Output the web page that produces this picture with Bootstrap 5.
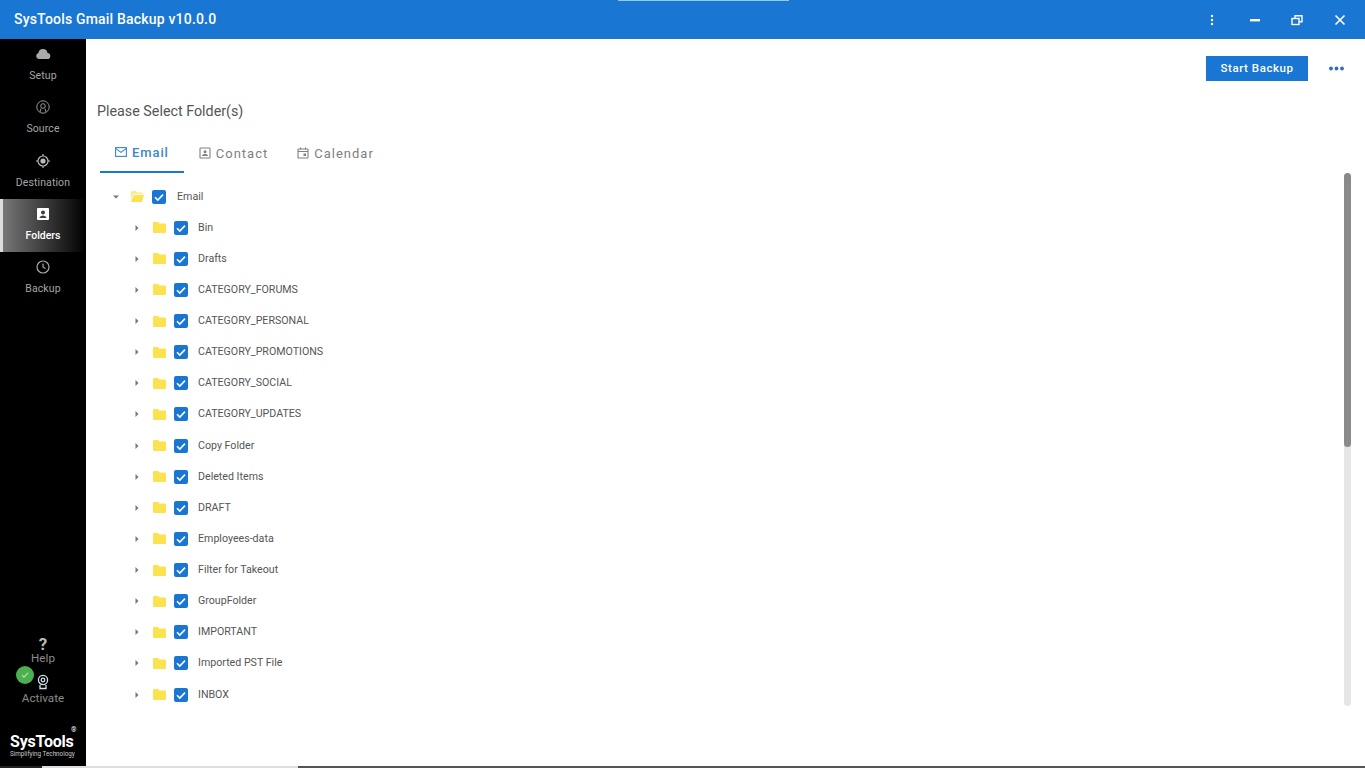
<!DOCTYPE html>
<html lang="en">
<head>
  <meta charset="UTF-8">
  <title>SysTools Gmail Backup</title>
  <link href="https://cdn.jsdelivr.net/npm/bootstrap@5.3.2/dist/css/bootstrap.min.css" rel="stylesheet">
  <style>
    html, body { height: 100%; overflow: hidden; }
    body { font-family: Roboto, "Liberation Sans", sans-serif; color: #444; background: #fff; }
    .app { height: 766px; }
    .titlebar { height: 39px; background: #1976d2; color: #fff; padding: 0 14px; position: relative; }
    .titlebar::before { content: ""; position: absolute; left: 618px; top: 0; width: 171px; height: 1px; background: #90caf9; }
    .app-title { font-size: 14px; font-weight: 500; letter-spacing: .19px; }
    .win-btn { width: 14px; height: 14px; display: block; }
    .win-gap { margin-right: 29px; }
    .win-gap-min { margin-right: 28px; }
    .win-close { margin-right: 4px; }
    .sidebar { width: 86px; background: #000; flex: none; }
    .side-item { height: 53.3px; color: #a5a5a5; font-size: 10.5px; letter-spacing: .1px; padding-top: 7px; }
    .side-item svg { width: 16px; height: 16px; margin-bottom: 6px; display: block; }
    .side-item.active { color: #fff; font-weight: 500; letter-spacing: 0; background: linear-gradient(90deg, #777, #000); border-left: 3px solid #ddd; padding-right: 3px; }
    .side-bottom { color: #8a8a8a; font-size: 11.7px; }
    .help-mark { font-size: 17px; line-height: 12px; font-weight: 700; color: #bbb; }
    .activate { position: relative; margin-top: 7px; }
    .activate svg.badge-icon { width: 14px; height: 16px; display: block; }
    .ok-dot { position: absolute; left: 16px; top: -8px; width: 18px; height: 18px; background: #4caf50; border-radius: 50%; }
    .logo { height: 38px; margin-top: 20px; padding: 5px 0 0 10px; color: #fff; position: relative; }
    .logo-name { font-size: 16px; font-weight: 700; line-height: 17px; letter-spacing: -.2px; }
    .logo-name sup { position: absolute; left: 71px; top: 2px; font-size: 7px; font-weight: 400; }
    .logo-sub { font-size: 6.3px; line-height: 8px; white-space: nowrap; color: #ccc; }
    .toolbar { height: 53px; padding: 17px 21px 0 0; }
    .btn-start { width: 102px; height: 25px; padding: 0; border: 0; border-radius: 0; background: #1976d2; color: #fff; font-size: 11.5px; font-weight: 500; letter-spacing: .55px; }
    .more-dots { margin-left: 21px; width: 15px; }
    .page-title { font-size: 14.3px; margin: 11px 0 0 11px; line-height: 17px; color: #555; }
    .tabs { margin: 15px 0 0 14px; height: 38px; }
    .tab { font-size: 13px; font-weight: 400; letter-spacing: 1px; color: #808080; height: 38px; padding: 0 15px; gap: 5px; }
    .tab svg { width: 12px; height: 12px; flex: none; margin-top: -2px; }
    .tab.active { color: #3d85c6; font-weight: 500; letter-spacing: .9px; border-bottom: 2px solid #1976d2; }
    .tab-next { margin-left: -1px; }
    .body-row { height: 533px; }
    .tree { flex: 1; padding-top: 8px; overflow: hidden; }
    .tree-row { height: 31.13px; font-size: 10.65px; color: #555; }
    .root { padding-left: 27px; }
    .child { padding-left: 48px; }
    .caret { width: 6px; height: 6px; flex: none; margin-right: 13px; }
    .folder { width: 13px; height: 11px; flex: none; margin-right: 8px; }
    .root .caret { margin-right: 12px; }
    .check { width: 14px; height: 14px; border-radius: 2px; background: #1976d2; flex: none; margin-right: 10px; }
    .root .check { margin-right: 11px; }
    .scroll-track { width: 7px; height: 533px; margin-right: 14px; background: #e6e6e6; border-radius: 4px; flex: none; }
    .scroll-thumb { height: 274px; background: #8a8a8a; border-radius: 4px; }
    .bottom-strip { height: 2px; background: #555; }
    .strip-a { width: 42px; background: #222; }
    .strip-b { width: 256px; background: #ddd; }
  </style>
</head>
<body>
  <svg width="0" height="0" class="position-absolute">
    <symbol id="folder" viewBox="0 0 13 11"><path fill="#fde24f" d="M1 0h4l1.500 1.500H12a1 1 0 0 1 1 1V10a1 1 0 0 1-1 1H1a1 1 0 0 1-1-1V1a1 1 0 0 1 1-1z"/></symbol>
    <symbol id="tick" viewBox="0 0 14 14"><path fill="none" stroke="#fff" stroke-width="1.600" d="M3 7.200l2.800 2.800L11 4.600"/></symbol>
    <symbol id="caret-right" viewBox="0 0 6 6"><path fill="#777" d="M1.500 0l3 3-3 3z"/></symbol>
  </svg>

  <div class="app d-flex flex-column">
    <!-- Title bar -->
    <header class="titlebar d-flex align-items-center">
      <div class="app-title">SysTools Gmail Backup v10.0.0</div>
      <div class="ms-auto d-flex align-items-center">
        <svg class="win-btn win-gap" viewBox="0 0 14 14"><g fill="#fff"><circle cx="7" cy="3" r="1.200"/><circle cx="7" cy="7" r="1.200"/><circle cx="7" cy="11" r="1.200"/></g></svg>
        <svg class="win-btn win-gap-min" viewBox="0 0 14 14"><rect x="2" y="6" width="10" height="2.400" fill="#fff"/></svg>
        <svg class="win-btn win-gap" viewBox="0 0 14 14"><g fill="none" stroke="#fff" stroke-width="1.400"><rect x="2" y="5.500" width="7" height="6"/><path d="M5 5V2.700h7v6H9.200"/></g></svg>
        <svg class="win-btn win-close" viewBox="0 0 14 14"><path stroke="#fff" stroke-width="1.600" d="M2.500 2.500l9 9M11.500 2.500l-9 9"/></svg>
      </div>
    </header>

    <div class="d-flex flex-grow-1">
      <!-- Sidebar -->
      <nav class="sidebar d-flex flex-column">
        <div class="side-item d-flex flex-column align-items-center">
          <svg viewBox="0 0 16 16"><path fill="#aaa" d="M4 13a3 3 0 0 1-.6-5.900A4.700 4.700 0 0 1 8 3a4.500 4.500 0 0 1 4.500 3.900A3 3 0 0 1 12 13z"/></svg>
          <span>Setup</span>
        </div>
        <div class="side-item d-flex flex-column align-items-center">
          <svg viewBox="0 0 16 16"><g fill="none" stroke="#999" stroke-width="1"><circle cx="8" cy="8" r="6.200"/><circle cx="8" cy="7" r="2.300"/><path d="M6 9.500L5 13M10 9.500L11 13"/></g></svg>
          <span>Source</span>
        </div>
        <div class="side-item d-flex flex-column align-items-center">
          <svg viewBox="0 0 16 16"><g fill="none" stroke="#bbb" stroke-width="1.200"><circle cx="8" cy="8" r="5"/><path d="M8 1v2M8 13v2M1 8h2M13 8h2"/></g><circle cx="8" cy="8" r="2.600" fill="#bbb"/></svg>
          <span>Destination</span>
        </div>
        <div class="side-item active d-flex flex-column align-items-center">
          <svg viewBox="0 0 16 16"><path fill="#fff" fill-rule="evenodd" d="M3 2h10a1 1 0 0 1 1 1v10a1 1 0 0 1-1 1H3a1 1 0 0 1-1-1V3a1 1 0 0 1 1-1zm5 2.500a2 2 0 1 0 0 4 2 2 0 0 0 0-4zM4.500 12h7c0-1.600-2-2.500-3.500-2.500S4.500 10.400 4.500 12z"/></svg>
          <span>Folders</span>
        </div>
        <div class="side-item d-flex flex-column align-items-center">
          <svg viewBox="0 0 16 16"><g fill="none" stroke="#aaa" stroke-width="1.200"><circle cx="8" cy="8" r="6"/><path d="M8 4.500V8l2.500 1.500"/></g></svg>
          <span>Backup</span>
        </div>

        <div class="side-bottom mt-auto d-flex flex-column align-items-center">
          <div class="help-mark">?</div>
          <div>Help</div>
          <div class="activate d-flex flex-column align-items-center w-100">
            <span class="ok-dot d-flex align-items-center justify-content-center">
              <svg width="10" height="10" viewBox="0 0 10 10"><path fill="none" stroke="#b7e0b9" stroke-width="1.200" d="M2 5.200l2 2 4-4.400"/></svg>
            </span>
            <svg class="badge-icon" viewBox="0 0 14 16"><g fill="none" stroke="#cfe3ef" stroke-width="1.300"><circle cx="7" cy="6" r="4.600"/><circle cx="7" cy="6" r="1.800"/><path d="M4 11v3.500h6V11"/></g></svg>
            <div>Activate</div>
          </div>
        </div>
        <div class="logo align-self-stretch">
          <div class="logo-name">SysTools<sup>®</sup></div>
          <div class="logo-sub">Simplifying Technology</div>
        </div>
      </nav>

      <!-- Main area -->
      <main class="flex-grow-1 d-flex flex-column">
        <div class="toolbar d-flex justify-content-end align-items-start">
          <button class="btn btn-start" type="button">Start Backup</button>
          <svg class="more-dots" height="25" viewBox="0 0 15 25"><g fill="#2f6fb5"><circle cx="2" cy="12.500" r="1.900"/><circle cx="7.500" cy="12.500" r="1.900"/><circle cx="13" cy="12.500" r="1.900"/></g></svg>
        </div>
        <div class="page-title">Please Select Folder(s)</div>

        <div class="tabs d-flex">
          <div class="tab active d-flex align-items-center">
            <svg viewBox="0 0 12 12"><g fill="none" stroke="#3d85c6" stroke-width="1.100"><rect x=".6" y="1.600" width="10.800" height="8.800"/><path d="M.6 2.400L6 6.400l5.400-4"/></g></svg>
            <span>Email</span>
          </div>
          <div class="tab d-flex align-items-center">
            <svg viewBox="0 0 12 12"><g fill="none" stroke="#808080" stroke-width="1.100"><rect x="1" y="1" width="10" height="10" rx=".6"/></g><circle cx="6" cy="4.800" r="1.500" fill="#808080"/><path fill="#808080" d="M3 9c0-1.300 1.800-1.900 3-1.900S9 7.700 9 9z"/></svg>
            <span>Contact</span>
          </div>
          <div class="tab tab-next d-flex align-items-center">
            <svg viewBox="0 0 12 12"><g fill="none" stroke="#808080" stroke-width="1.100"><rect x="1" y="2" width="10" height="9" rx=".6"/><path d="M1 4.500h10M3.500 .5V2.500M8.500 .5V2.500"/></g><rect x="6.500" y="6.500" width="2.500" height="2.500" fill="#808080"/></svg>
            <span>Calendar</span>
          </div>
        </div>

        <div class="body-row d-flex">
          <div class="tree" id="tree">
            <div class="tree-row root d-flex align-items-center">
              <svg class="caret" viewBox="0 0 6 6"><path fill="#777" d="M0 1.500h6L3 4.500z"/></svg>
              <svg class="folder" viewBox="0 0 13 11"><path fill="#fdeb8d" d="M1 0h4l1.500 1.500H11a1 1 0 0 1 1 1V3H2.500L0 10V1a1 1 0 0 1 1-1z"/><path fill="#fde24f" d="M3 4h10l-2 7H0z"/></svg>
              <svg class="check" viewBox="0 0 14 14"><use href="#tick"/></svg>
              <span>Email</span>
            </div>
          </div>
          <div class="scroll-track"><div class="scroll-thumb"></div></div>
        </div>
      </main>
    </div>
  </div>
  <div class="bottom-strip d-flex"><div class="strip-a"></div><div class="strip-b"></div></div>

  <script>
    // folder rows under the Email root
    const folders = ['Bin', 'Drafts', 'CATEGORY_FORUMS', 'CATEGORY_PERSONAL', 'CATEGORY_PROMOTIONS',
      'CATEGORY_SOCIAL', 'CATEGORY_UPDATES', 'Copy Folder', 'Deleted Items', 'DRAFT', 'Employees-data',
      'Filter for Takeout', 'GroupFolder', 'IMPORTANT', 'Imported PST File', 'INBOX'];
    document.getElementById('tree').insertAdjacentHTML('beforeend', folders.map(name => `
      <div class="tree-row child d-flex align-items-center">
        <svg class="caret"><use href="#caret-right"/></svg>
        <svg class="folder"><use href="#folder"/></svg>
        <svg class="check"><use href="#tick"/></svg>
        <span>${name}</span>
      </div>`).join(''));
  </script>
  <script src="https://cdn.jsdelivr.net/npm/bootstrap@5.3.2/dist/js/bootstrap.bundle.min.js"></script>
</body>
</html>
